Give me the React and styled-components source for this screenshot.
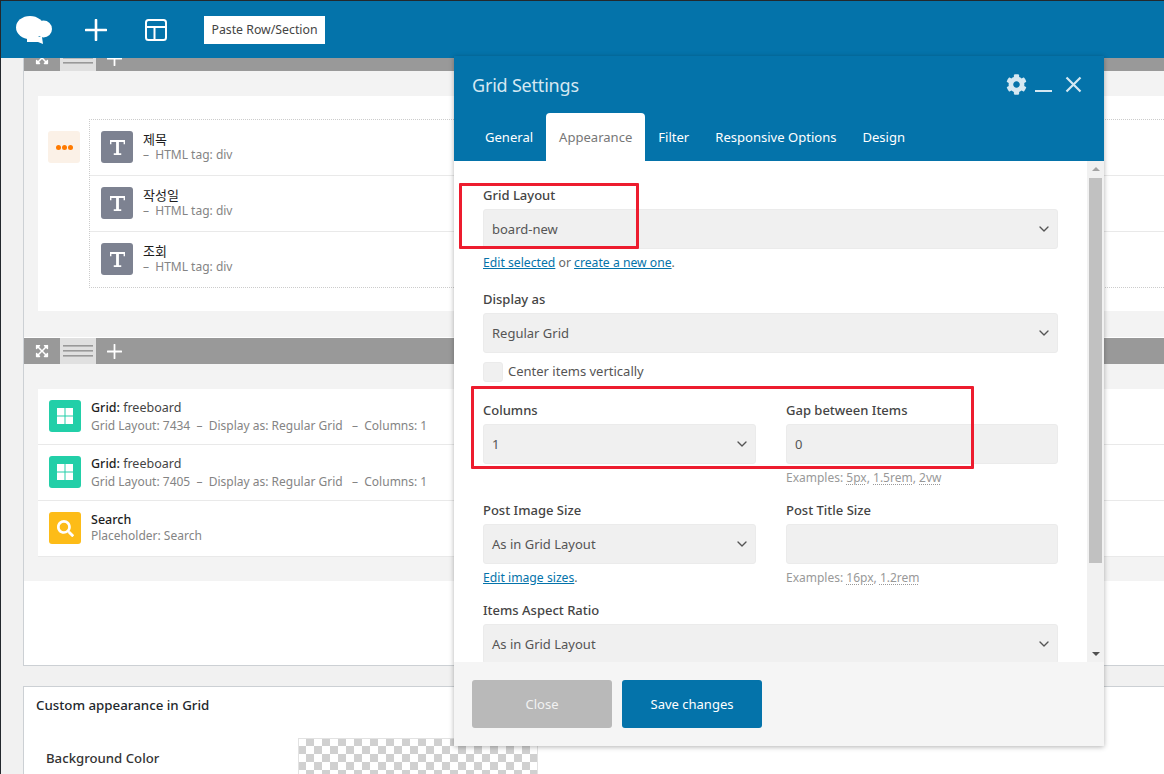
import React from "react";
import styled, { createGlobalStyle } from "styled-components";
import { ChevronDown } from "lucide-react";
import { FaCog, FaExpandArrowsAlt, FaSearch } from "react-icons/fa";

const FONT = `"Noto Sans", "Noto Sans CJK KR", sans-serif`;
const BLUE = "#0473aa";

const Global = createGlobalStyle`
  html, body {
    margin: 0;
    padding: 0;
    background: #f1f1f1;
    overflow: hidden;
  }
  * { box-sizing: border-box; }
`;

const Root = styled.div`
  position: relative;
  display: flex;
  width: 1164px;
  height: 774px;
  overflow: hidden;
  font-family: ${FONT};
  font-size: 13px;
  color: #444;
`;

const Edge = styled.div`
  flex: 0 0 1px;
  background: #23282d;
`;

const Content = styled.div`
  flex: 1;
  min-width: 0;
`;

const TopBar = styled.header`
  position: relative;
  z-index: 2;
  display: flex;
  align-items: center;
  height: 58px;
  padding-left: 15px;
  background: ${BLUE};
  border-top: 1px solid #23282d;
`;

const TopIcon = styled.svg`
  flex: none;
  display: block;
  margin-left: ${(p) => p.$left || 0}px;
`;

const PasteButton = styled.button`
  flex: none;
  width: 121px;
  height: 28px;
  margin: 0 0 0 37px;
  padding: 0;
  border: 0;
  background: #fff;
  color: #444;
  font-family: ${FONT};
  font-size: 12.3px;
`;

const Panel = styled.section`
  margin: ${(p) => p.$top}px -8px 0 22px;
  padding-bottom: ${(p) => p.$bottom || 0}px;
  background: #fff;
  border: 1px solid #ccd0d4;
  border-right: 0;
`;

const RowBar = styled.div`
  display: flex;
  height: 26px;
  background: #999;
  color: #fff;
`;

const BarCell = styled.div`
  display: flex;
  align-items: center;
  justify-content: center;
  width: 36px;
  background: ${(p) => (p.$light ? "#e0e0e0" : "transparent")};
`;

const RowBody = styled.div`
  margin-bottom: ${(p) => p.$gap || 0}px;
  padding: 25px 0 ${(p) => p.$bottom}px 14px;
  background: #f3f3f3;
`;

const ColumnCard = styled.div`
  display: flex;
  align-items: flex-start;
  gap: 9px;
  padding: 23px 0 23px 10px;
  background: #fff;
`;

const MoreBox = styled.div`
  flex: none;
  display: flex;
  align-items: center;
  justify-content: center;
  gap: 1px;
  width: 32px;
  height: 32px;
  margin-top: 12px;
  background: #fbf1e7;
  border-radius: 3px;
`;

const Dot = styled.i`
  width: 5px;
  height: 5px;
  background: #ff7a00;
  border-radius: 50%;
`;

const DottedList = styled.div`
  flex: 1;
  border: 1px dotted #ccc;
  border-right: 0;
`;

const ElementRow = styled.div`
  display: flex;
  align-items: flex-start;
  gap: 10px;
  height: ${(p) => p.$height || 56}px;
  padding: 11px 0 0 ${(p) => p.$inset}px;
  background: #fff;
  border-bottom: ${(p) => (p.$last ? "0" : "1px solid #e9e9e9")};
`;

const Tile = styled.div`
  flex: none;
  display: flex;
  align-items: center;
  justify-content: center;
  width: 32px;
  height: 32px;
  background: ${(p) => p.$color};
  border-radius: 3px;
  color: #fff;
`;

const ElementTitle = styled.div`
  color: #1d1d1d;
  font-size: ${(p) => (p.$ko ? 13 : 12.5)}px;
  font-weight: ${(p) => (p.$ko ? 400 : 500)};
  line-height: 16px;
  span { color: #444; font-weight: 400; }
`;

const ElementMeta = styled.div`
  margin-top: ${(p) => p.$shift || 0}px;
  color: #848484;
  font-size: 12px;
  line-height: ${(p) => p.$line || 15}px;
  white-space: pre;
`;

const ListCard = styled.div`
  background: #fff;
`;

const PanelTitle = styled.h3`
  margin: 0;
  padding: 8px 0 0 12px;
  color: #23282d;
  font-size: 13.3px;
  font-weight: 500;
  line-height: 20px;
`;

const ColorRow = styled.div`
  display: grid;
  grid-template-columns: 252px 240px;
  margin: 23px 0 0 22px;
`;

const ColorLabel = styled.div`
  padding-top: 10px;
  color: #333;
  font-size: 13.2px;
  font-weight: 500;
  line-height: 20px;
`;

const Checker = styled.div`
  height: 60px;
  border: 1px solid #e2e2e2;
  border-width: 1px 1px 0;
  background: repeating-conic-gradient(#d0d0d0 0 25%, #fff 0 50%) -1px -1px / 16px 16px;
`;

const Modal = styled.div`
  position: absolute;
  z-index: 3;
  left: 454px;
  top: 56px;
  display: flex;
  flex-direction: column;
  width: 650px;
  height: 690px;
  background: #fff;
  box-shadow: 0 1px 5px rgba(0, 0, 0, 0.3);
`;

const ModalHead = styled.div`
  flex: none;
  background: ${BLUE};
`;

const ModalTitleRow = styled.div`
  display: flex;
  align-items: center;
  justify-content: space-between;
  height: 57px;
  padding: 0 22px 0 18px;
  color: #d5e8f2;
`;

const ModalTitle = styled.div`
  font-size: 18px;
  letter-spacing: -0.2px;
  line-height: 24px;
`;

const ModalTools = styled.div`
  display: flex;
  align-items: center;
`;

const MinimizeBar = styled.i`
  width: 17px;
  height: 2px;
  margin: 13px 13px 0 8px;
  background: #d5e8f2;
`;

const TabRow = styled.div`
  display: flex;
  height: 48px;
  padding-left: 18px;
`;

const Tab = styled.div`
  padding: 0 13px;
  color: ${(p) => (p.$active ? "#777" : "#fff")};
  background: ${(p) => (p.$active ? "#fff" : "transparent")};
  border-radius: 4px 4px 0 0;
  font-size: 13.05px;
  line-height: 48px;
`;

const ModalBody = styled.div`
  flex: none;
  display: flex;
  height: 501px;
  overflow: hidden;
`;

const Form = styled.div`
  flex: 1;
  min-width: 0;
  padding: 24px 29px 0;
`;

const Field = styled.div`
  margin-top: ${(p) => p.$top || 0}px;
`;

const TwoCols = styled.div`
  display: grid;
  grid-template-columns: 273px 272px;
  column-gap: 30px;
  margin-top: ${(p) => p.$top || 0}px;
`;

const Label = styled.div`
  margin-bottom: 4px;
  color: #444;
  font-size: 13px;
  font-weight: 500;
  line-height: 20px;
`;

const Control = styled.div`
  display: flex;
  align-items: center;
  justify-content: space-between;
  height: 40px;
  padding: 0 5px 0 8px;
  background: #f0f0f0;
  border: 1px solid #ebebeb;
  border-radius: 3px;
  color: #555;
  font-size: 13px;
  svg { color: #555; }
`;

const Hint = styled.div`
  margin-top: 4px;
  color: ${(p) => (p.$grey ? "#999" : "#666")};
  font-size: ${(p) => (p.$grey ? 12 : 12.2)}px;
  line-height: 20px;
  a { color: ${BLUE}; text-decoration: underline; }
  abbr { text-decoration: underline dotted; text-underline-offset: 2px; }
`;

const CheckRow = styled.div`
  display: flex;
  align-items: flex-start;
  gap: 5px;
  height: 20px;
  margin-top: 9px;
  color: #555;
  font-size: 13px;
  line-height: 18px;
`;

const CheckBox = styled.div`
  width: 20px;
  height: 20px;
  background: #f0f0f0;
  border: 1px solid #ebebeb;
  border-radius: 3px;
`;

const ScrollTrack = styled.div`
  flex: 0 0 17px;
  display: flex;
  flex-direction: column;
  align-items: center;
  justify-content: space-between;
  background: #f1f1f1;
  padding: 6px 0 6px;
`;

const Arrow = styled.i`
  width: 0;
  height: 0;
  border-left: 4px solid transparent;
  border-right: 4px solid transparent;
  ${(p) => (p.$down ? "border-top: 4px solid #505050;" : "border-bottom: 4px solid #a3a3a3;")}
`;

const ScrollThumb = styled.div`
  flex: none;
  width: 13px;
  height: 385px;
  margin: 7px 0 auto;
  background: #c1c1c1;
`;

const ModalFoot = styled.div`
  flex: 1;
  display: flex;
  gap: 10px;
  padding: 18px;
  background: #f5f5f5;
`;

const FootButton = styled.button`
  width: 140px;
  height: 48px;
  padding: 0;
  border: 0;
  border-radius: 3px;
  background: ${(p) => (p.$muted ? "#b9b9b9" : BLUE)};
  color: ${(p) => (p.$muted ? "#f2f2f2" : "#fff")};
  font-family: ${FONT};
  font-size: 13px;
`;

// red marks drawn over the screenshot
const RedMark = styled.div`
  position: absolute;
  z-index: 4;
  left: ${(p) => p.$x}px;
  top: ${(p) => p.$y}px;
  width: ${(p) => p.$w}px;
  height: ${(p) => p.$h}px;
  border: 3px solid #ed1c2e;
  border-radius: 1px;
`;

const Logo = () => (
  <TopIcon as="svg" width="36" height="28" viewBox="0 0 36 28" fill="#fff">
    <ellipse cx="14" cy="11.5" rx="14" ry="11.5" />
    <ellipse cx="27.5" cy="13" rx="8.5" ry="8.5" />
    <path d="M11 21h15l1 7-5-2-11 0z" />
  </TopIcon>
);

const PlusIcon = ({ size = 22, width = 2.6, left }) => (
  <TopIcon $left={left} width={size} height={size} viewBox="0 0 22 22" fill="none" stroke="#fff" strokeWidth={width} strokeLinecap="round">
    <path d="M11 1v20M1 11h20" />
  </TopIcon>
);

const LayoutIcon = () => (
  <TopIcon $left={38} width="22" height="22" viewBox="0 0 22 22" fill="none" stroke="#fff" strokeWidth="2">
    <rect x="1" y="1" width="20" height="20" rx="2.5" />
    <path d="M1 8h20M9.5 8v13" />
  </TopIcon>
);

const Lines = () => (
  <svg width="30" height="12" viewBox="0 0 30 12" fill="#999">
    <rect y="0" width="30" height="1.6" />
    <rect y="5" width="30" height="1.6" />
    <rect y="10" width="30" height="1.6" />
  </svg>
);

const SerifT = () => (
  <svg width="15" height="15" viewBox="0 0 16 16" fill="#fff">
    <path d="M0 0h16v4.500h-1.500V2H9.500v12h2.500v2H4v-2h2.500V2H1.500v2.500H0z" />
  </svg>
);

const GridGlyph = () => (
  <svg width="16" height="16" viewBox="0 0 16 16" fill="#fff">
    <rect width="7.500" height="7.500" />
    <rect x="8.500" width="7.500" height="7.500" />
    <rect y="8.500" width="7.500" height="7.500" />
    <rect x="8.500" y="8.500" width="7.500" height="7.500" />
  </svg>
);

const CloseGlyph = () => (
  <svg width="17" height="17" viewBox="0 0 17 17" fill="none" stroke="#d5e8f2" strokeWidth="2.200">
    <path d="M1.500 1.500l14 14M15.500 1.500l-14 14" />
  </svg>
);

const SectionBar = () => (
  <RowBar>
    <BarCell><FaExpandArrowsAlt size={14} /></BarCell>
    <BarCell $light><Lines /></BarCell>
    <BarCell><PlusIcon size={15} width={2.600} /></BarCell>
  </RowBar>
);

const Select = ({ children }) => (
  <Control>
    {children}
    <ChevronDown size={16} strokeWidth={2} />
  </Control>
);

const textRows = ["제목", "작성일", "조회"];
const tabs = ["General", "Appearance", "Filter", "Responsive Options", "Design"];

export default function App() {
  return (
    <Root>
      <Global />
      <Edge />
      <Content>
        <TopBar>
          <Logo />
          <PlusIcon left={33} />
          <LayoutIcon />
          <PasteButton>Paste Row/Section</PasteButton>
        </TopBar>

        <Panel $top={-14} $bottom={84}>
          <SectionBar />
          <RowBody $bottom={26} $gap={1}>
            <ColumnCard>
              <MoreBox><Dot /><Dot /><Dot /></MoreBox>
              <DottedList>
                {textRows.map((title, i) => (
                  <ElementRow key={title} $inset={11} $last={i === 2} $height={i === 2 ? 55 : 56}>
                    <Tile $color="#7d8291"><SerifT /></Tile>
                    <div>
                      <ElementTitle $ko>{title}</ElementTitle>
                      <ElementMeta>–  HTML tag: div</ElementMeta>
                    </div>
                  </ElementRow>
                ))}
              </DottedList>
            </ColumnCard>
          </RowBody>
          <SectionBar />
          <RowBody $bottom={24}>
            <ListCard>
              <ElementRow $inset={11}>
                <Tile $color="#22cfa8"><GridGlyph /></Tile>
                <div>
                  <ElementTitle>Grid: <span>freeboard</span></ElementTitle>
                  <ElementMeta $line={17} $shift={1}>{"Grid Layout: 7434  –  Display as: Regular Grid   –  Columns: 1"}</ElementMeta>
                </div>
              </ElementRow>
              <ElementRow $inset={11}>
                <Tile $color="#22cfa8"><GridGlyph /></Tile>
                <div>
                  <ElementTitle>Grid: <span>freeboard</span></ElementTitle>
                  <ElementMeta $line={17} $shift={1}>{"Grid Layout: 7405  –  Display as: Regular Grid   –  Columns: 1"}</ElementMeta>
                </div>
              </ElementRow>
              <ElementRow $inset={11}>
                <Tile $color="#fdbc18"><FaSearch size={17} /></Tile>
                <div>
                  <ElementTitle>Search</ElementTitle>
                  <ElementMeta>Placeholder: Search</ElementMeta>
                </div>
              </ElementRow>
            </ListCard>
          </RowBody>
        </Panel>

        <Panel $top={20}>
          <PanelTitle>Custom appearance in Grid</PanelTitle>
          <ColorRow>
            <ColorLabel>Background Color</ColorLabel>
            <Checker />
          </ColorRow>
        </Panel>
      </Content>

      <Modal>
        <ModalHead>
          <ModalTitleRow>
            <ModalTitle>Grid Settings</ModalTitle>
            <ModalTools>
              <FaCog size={21} />
              <MinimizeBar />
              <CloseGlyph />
            </ModalTools>
          </ModalTitleRow>
          <TabRow>
            {tabs.map((t) => (
              <Tab key={t} $active={t === "Appearance"}>{t}</Tab>
            ))}
          </TabRow>
        </ModalHead>

        <ModalBody>
          <Form>
            <Field>
              <Label>Grid Layout</Label>
              <Select>board-new</Select>
              <Hint><a>Edit selected</a> or <a>create a new one</a>.</Hint>
            </Field>
            <Field $top={16}>
              <Label>Display as</Label>
              <Select>Regular Grid</Select>
            </Field>
            <CheckRow><CheckBox />Center items vertically</CheckRow>
            <TwoCols $top={18}>
              <Field>
                <Label>Columns</Label>
                <Select>1</Select>
              </Field>
              <Field>
                <Label>Gap between Items</Label>
                <Control>0</Control>
                <Hint $grey>Examples: <abbr>5px</abbr>, <abbr>1.5rem</abbr>, <abbr>2vw</abbr></Hint>
              </Field>
            </TwoCols>
            <TwoCols $top={12}>
              <Field>
                <Label>Post Image Size</Label>
                <Select>As in Grid Layout</Select>
                <Hint><a>Edit image sizes</a>.</Hint>
              </Field>
              <Field>
                <Label>Post Title Size</Label>
                <Control />
                <Hint $grey>Examples: <abbr>16px</abbr>, <abbr>1.2rem</abbr></Hint>
              </Field>
            </TwoCols>
            <Field $top={12}>
              <Label>Items Aspect Ratio</Label>
              <Select>As in Grid Layout</Select>
            </Field>
          </Form>
          <ScrollTrack>
            <Arrow />
            <ScrollThumb />
            <Arrow $down />
          </ScrollTrack>
        </ModalBody>

        <ModalFoot>
          <FootButton $muted>Close</FootButton>
          <FootButton>Save changes</FootButton>
        </ModalFoot>
      </Modal>

      <RedMark $x={459} $y={183} $w={180} $h={66} />
      <RedMark $x={471} $y={386} $w={503} $h={83} />
    </Root>
  );
}
